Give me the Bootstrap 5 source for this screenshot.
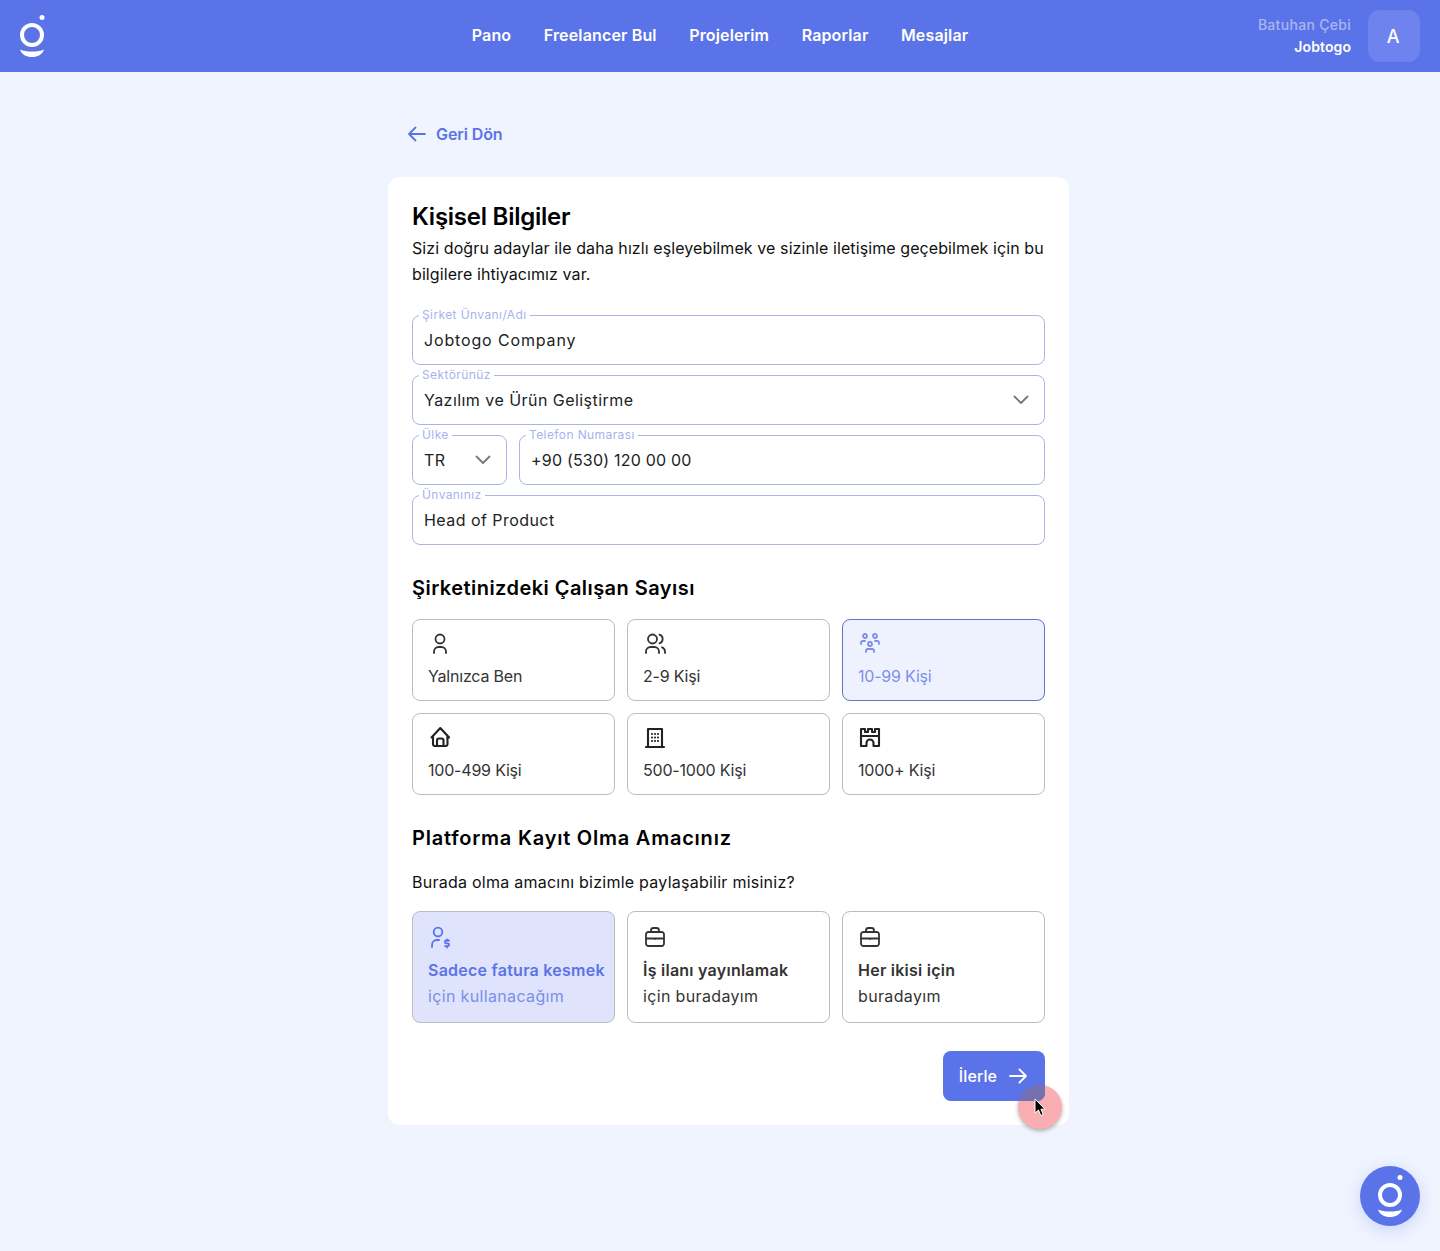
<!DOCTYPE html>
<html lang="tr">
<head>
<meta charset="utf-8">
<title>Kişisel Bilgiler</title>
<link rel="stylesheet" href="https://cdn.jsdelivr.net/npm/bootstrap@5.3.0/dist/css/bootstrap.min.css">
<style>
html,body{height:100%;overflow:hidden}
body{background:#f0f4ff;font-family:Inter,"Noto Sans",sans-serif;color:#111;font-size:16px}
.topbar.navbar{background:#5b73e8;height:72px;padding:0 20px;flex-wrap:nowrap}
.topside{flex:1 1 0}
.toplogo{margin-left:-1px}
.toplink{color:#fff;font-weight:600;font-size:16px;text-decoration:none;letter-spacing:.15px}
.topnav{gap:32.500px;padding-bottom:2px}
.who{font-size:14px;line-height:22px;text-align:right;margin-right:17px}
.who-name{color:#a9b6f2;font-weight:500;letter-spacing:.3px}
.who-co{color:#fff;font-weight:600;letter-spacing:.1px}
.avatar{width:52px;height:52px;border-radius:12px;background:#6f83ee;color:#fff;font-size:18px;font-weight:500;padding-right:2px}
.shell{width:681px;margin:0 auto 0 388px}
.backlink{color:#5b73e8;font-weight:600;font-size:16px;height:105px;text-decoration:none;padding:18px 0 0 20px;gap:10px;letter-spacing:-.1px}
.panel{background:#fff;border-radius:12px;padding:24px;height:948px;position:relative}
.panel-title{font-size:24px;line-height:32px;font-weight:600;margin:0 0 2px;color:#000;letter-spacing:-.25px}
.panel-lead{font-size:16px;line-height:26px;margin:0 0 28px;color:#111;letter-spacing:.09px}
.field{position:relative;margin-bottom:10px}
.field-label{position:absolute;left:7px;top:-7px;background:#fff;padding:0 3px;font-size:12px;line-height:14px;color:#a7b3ec;z-index:1;letter-spacing:.4px}
.form-control.fieldbox,.form-select.fieldbox{height:50px;border:1px solid #aab5e6;border-radius:8px;padding:0 11px;font-size:16px;color:#222;font-weight:400;box-shadow:none;background-color:#fff;letter-spacing:.45px}
.form-control.fieldbox-wide{letter-spacing:.85px}
.form-control.fieldbox-tight{letter-spacing:.2px}
.form-select.fieldbox{background-image:url("data:image/svg+xml,%3csvg xmlns='http://www.w3.org/2000/svg' viewBox='0 0 16 10'%3e%3cpath fill='none' stroke='%23777' stroke-width='1.800' stroke-linecap='round' stroke-linejoin='round' d='M1.500 1.500 8 8l6.500-6.500'/%3e%3c/svg%3e");background-position:right 15px center;background-size:16px 10px}
.phone-row{display:grid;grid-template-columns:95px minmax(0,1fr);gap:12px}
.section-head{font-size:20px;line-height:28px;font-weight:600;color:#000;margin:29px 0 17px;letter-spacing:.45px}
.section-wide{letter-spacing:.77px;margin-bottom:0}
.tile-grid{display:grid;grid-template-columns:repeat(3,minmax(0,1fr));gap:12px}
.tile{border:1px solid #bdbdbd;border-radius:8px;padding:11px 15px;color:#333;font-size:16px;line-height:26px;background:#fff;letter-spacing:-.2px}
.tile svg{display:block;margin-bottom:8px;width:24px;height:24px;fill:none;stroke:currentColor;stroke-width:1.800;stroke-linecap:round;stroke-linejoin:round}
.tile svg.heavy{stroke-width:2.100;color:#222}
.tile-on{background:#eef2ff;border-color:#6a6fd0;color:#7b8fe9}
.tile-tall{padding:13px 15px;white-space:nowrap;letter-spacing:.35px}
.tile-tall b{display:block;font-weight:600;letter-spacing:.25px}
.tile-pick{background:#dfe3fb;color:#7b8fe9}
.tile-pick b{color:#5b73e8}
.tile-pick svg{color:#5b73e8}
.sub-lead{font-size:16px;line-height:26px;margin:17px 0 16px;letter-spacing:.25px}
.nextbtn.btn{width:102px;height:50px;background:#5b73e8;color:#fff;border:0;border-radius:8px;font-weight:500;font-size:16px;gap:12px;position:relative;overflow:hidden;padding:0 2px 0 0;z-index:2;letter-spacing:.1px}
.halo-in{position:absolute;width:44px;height:44px;border-radius:50%;background:#7570ae;left:75px;top:34px}
.halo{position:absolute;left:630px;top:908px;width:44px;height:44px;border-radius:50%;background:#fbaeb1;box-shadow:0 2px 4px rgba(0,0,0,.3);z-index:1}
.pointer{position:absolute;left:646px;top:921px;z-index:3;width:12px;height:19px}
.chat{position:fixed;right:20px;bottom:25px;width:60px;height:60px;border-radius:50%;background:#5b73e8;box-shadow:0 4px 16px rgba(91,115,232,.25)}
</style>
</head>
<body>
<nav class="topbar navbar d-flex align-items-center">
  <div class="topside d-flex">
    <svg class="toplogo" width="26" height="44" viewBox="0 0 26 44" fill="none" aria-label="Jobtogo">
      <circle cx="13" cy="21" r="10" stroke="#fff" stroke-width="4"/>
      <circle cx="23" cy="3.500" r="2.500" fill="#fff"/>
      <path d="M1 35.500c3 1.500 7 2 12 2s9-.5 12-2c-1.500 5-6.500 7.500-12 7.500S2.500 40.500 1 35.500z" fill="#fff"/>
    </svg>
  </div>
  <div class="topnav d-flex">
    <a class="toplink" href="#">Pano</a>
    <a class="toplink" href="#">Freelancer Bul</a>
    <a class="toplink" href="#">Projelerim</a>
    <a class="toplink" href="#">Raporlar</a>
    <a class="toplink" href="#">Mesajlar</a>
  </div>
  <div class="topside d-flex justify-content-end align-items-center">
    <div class="who"><div class="who-name">Batuhan Çebi</div><div class="who-co">Jobtogo</div></div>
    <div class="avatar d-flex align-items-center justify-content-center">A</div>
  </div>
</nav>

<main class="shell">
  <a class="backlink d-flex align-items-center" href="#">
    <svg width="18" height="16" viewBox="0 0 18 16" fill="none" stroke="currentColor" stroke-width="1.800" stroke-linecap="round" stroke-linejoin="round"><path d="M17 8H1M7.500 1.500 1 8l6.500 6.500"/></svg>
    Geri Dön
  </a>
  <section class="panel">
    <h1 class="panel-title">Kişisel Bilgiler</h1>
    <p class="panel-lead">Sizi doğru adaylar ile daha hızlı eşleyebilmek ve sizinle iletişime geçebilmek için bu bilgilere ihtiyacımız var.</p>

    <div class="field"><label class="field-label" for="f1">Şirket Ünvanı/Adı</label><input id="f1" class="form-control fieldbox fieldbox-wide" value="Jobtogo Company"></div>
    <div class="field"><label class="field-label" for="f2">Sektörünüz</label><select id="f2" class="form-select fieldbox"><option>Yazılım ve Ürün Geliştirme</option></select></div>
    <div class="phone-row">
      <div class="field"><label class="field-label" for="f3">Ülke</label><select id="f3" class="form-select fieldbox"><option>TR</option></select></div>
      <div class="field"><label class="field-label" for="f4">Telefon Numarası</label><input id="f4" class="form-control fieldbox fieldbox-tight" value="+90 (530) 120 00 00"></div>
    </div>
    <div class="field"><label class="field-label" for="f5">Ünvanınız</label><input id="f5" class="form-control fieldbox" value="Head of Product"></div>

    <h2 class="section-head">Şirketinizdeki Çalışan Sayısı</h2>
    <div class="tile-grid">
      <div class="tile"><svg viewBox="0 0 24 24"><circle cx="12" cy="8" r="4.500"/><path d="M6 22v-1.500a4.500 4.500 0 0 1 4.500-4.500h3a4.500 4.500 0 0 1 4.500 4.500V22"/></svg>Yalnızca Ben</div>
      <div class="tile"><svg viewBox="0 0 24 24"><circle cx="9.500" cy="8" r="4.500"/><path d="M3 22v-1.500a4.500 4.500 0 0 1 4.500-4.500h4a4.500 4.500 0 0 1 4.500 4.500V22"/><path d="M16.500 3.700a4.500 4.500 0 0 1 0 8.600"/><path d="M22 22v-1.500a4.500 4.500 0 0 0-3-4.200"/></svg>2-9 Kişi</div>
      <div class="tile tile-on"><svg viewBox="0 0 24 24"><path d="M10 13a2 2 0 1 0 4 0a2 2 0 0 0-4 0"/><path d="M8 21v-1a2 2 0 0 1 2-2h4a2 2 0 0 1 2 2v1"/><path d="M15 5a2 2 0 1 0 4 0a2 2 0 0 0-4 0"/><path d="M17 10h2a2 2 0 0 1 2 2v1"/><path d="M5 5a2 2 0 1 0 4 0a2 2 0 0 0-4 0"/><path d="M3 13v-1a2 2 0 0 1 2-2h2"/></svg>10-99 Kişi</div>
      <div class="tile"><svg class="heavy" viewBox="0 0 24 24"><path d="M5 12.500H3.500l8.800-9.500 8.800 9.500h-1.600"/><path d="M5 12v7a2 2 0 0 0 2 2h10.500a2 2 0 0 0 2-2v-7"/><path d="M9 21v-5.500a2 2 0 0 1 2-2h2.500a2 2 0 0 1 2 2V21"/></svg>100-499 Kişi</div>
      <div class="tile"><svg class="heavy" viewBox="0 0 24 24"><path d="M3 22h18"/><path d="M5 22V4h14v18"/><path d="M9 9h.01M12 9h.01M15 9h.01M9 12.500h.01M12 12.500h.01M15 12.500h.01M9 16h.01M12 16h.01M15 16h.01"/></svg>500-1000 Kişi</div>
      <div class="tile"><svg class="heavy" viewBox="0 0 24 24"><path d="M3 21V4h4v3h3V4h4v3h3V4h4v17h-5.500v-3a3.500 3.500 0 0 0-7 0v3z"/><path d="M3 11h18"/></svg>1000+ Kişi</div>
    </div>

    <h2 class="section-head section-wide">Platforma Kayıt Olma Amacınız</h2>
    <p class="sub-lead">Burada olma amacını bizimle paylaşabilir misiniz?</p>
    <div class="tile-grid">
      <div class="tile tile-tall tile-pick"><svg viewBox="0 0 24 24"><circle cx="10" cy="7" r="4.300"/><path d="M4 22v-2a5 5 0 0 1 5-5h2"/><path d="M21 15.500h-2.700a1.400 1.400 0 0 0 0 2.800h1.400a1.400 1.400 0 0 1 0 2.800H17"/><path d="M19 21.500v1m0-8v1"/></svg><b>Sadece fatura kesmek</b>için kullanacağım</div>
      <div class="tile tile-tall"><svg viewBox="0 0 24 24"><path d="M3 9.500a2.500 2.500 0 0 1 2.500-2.500h13a2.500 2.500 0 0 1 2.500 2.500v9a2.500 2.500 0 0 1-2.500 2.500h-13a2.500 2.500 0 0 1-2.500-2.500z"/><path d="M8 7V5.500a2.500 2.500 0 0 1 2.500-2.500h3a2.500 2.500 0 0 1 2.500 2.500V7"/><path d="M3 13.500h18M12 14h.01"/></svg><b>İş ilanı yayınlamak</b>için buradayım</div>
      <div class="tile tile-tall"><svg viewBox="0 0 24 24"><path d="M3 9.500a2.500 2.500 0 0 1 2.500-2.500h13a2.500 2.500 0 0 1 2.500 2.500v9a2.500 2.500 0 0 1-2.500 2.500h-13a2.500 2.500 0 0 1-2.500-2.500z"/><path d="M8 7V5.500a2.500 2.500 0 0 1 2.500-2.500h3a2.500 2.500 0 0 1 2.500 2.500V7"/><path d="M3 13.500h18M12 14h.01"/></svg><b>Her ikisi için</b>buradayım</div>
    </div>

    <div class="d-flex justify-content-end" style="margin-top:28px">
      <button class="btn nextbtn d-flex align-items-center justify-content-center" type="button">
        <span class="halo-in"></span>
        <span class="position-relative">İlerle</span>
        <svg class="position-relative" width="18" height="16" viewBox="0 0 18 16" fill="none" stroke="#fff" stroke-width="1.800" stroke-linecap="round" stroke-linejoin="round"><path d="M1 8h16M10.500 1.500 17 8l-6.500 6.500"/></svg>
      </button>
    </div>
    <span class="halo"></span>
    <svg class="pointer" viewBox="0 0 12 19"><path d="M1 1v14l3.500-3 2.300 5.500 2.400-1-2.300-5.300H11z" fill="#000" stroke="#fff" stroke-width="1"/></svg>
  </section>
</main>

<div class="chat d-flex align-items-center justify-content-center">
  <svg width="26" height="44" viewBox="0 0 26 44" fill="none" aria-hidden="true">
    <circle cx="13" cy="21" r="10" stroke="#fff" stroke-width="4"/>
    <circle cx="23" cy="3.500" r="2.500" fill="#fff"/>
    <path d="M1 35.500c3 1.500 7 2 12 2s9-.5 12-2c-1.500 5-6.500 7.500-12 7.500S2.500 40.500 1 35.500z" fill="#fff"/>
  </svg>
</div>
<script src="https://cdn.jsdelivr.net/npm/bootstrap@5.3.0/dist/js/bootstrap.bundle.min.js"></script>
</body>
</html>
